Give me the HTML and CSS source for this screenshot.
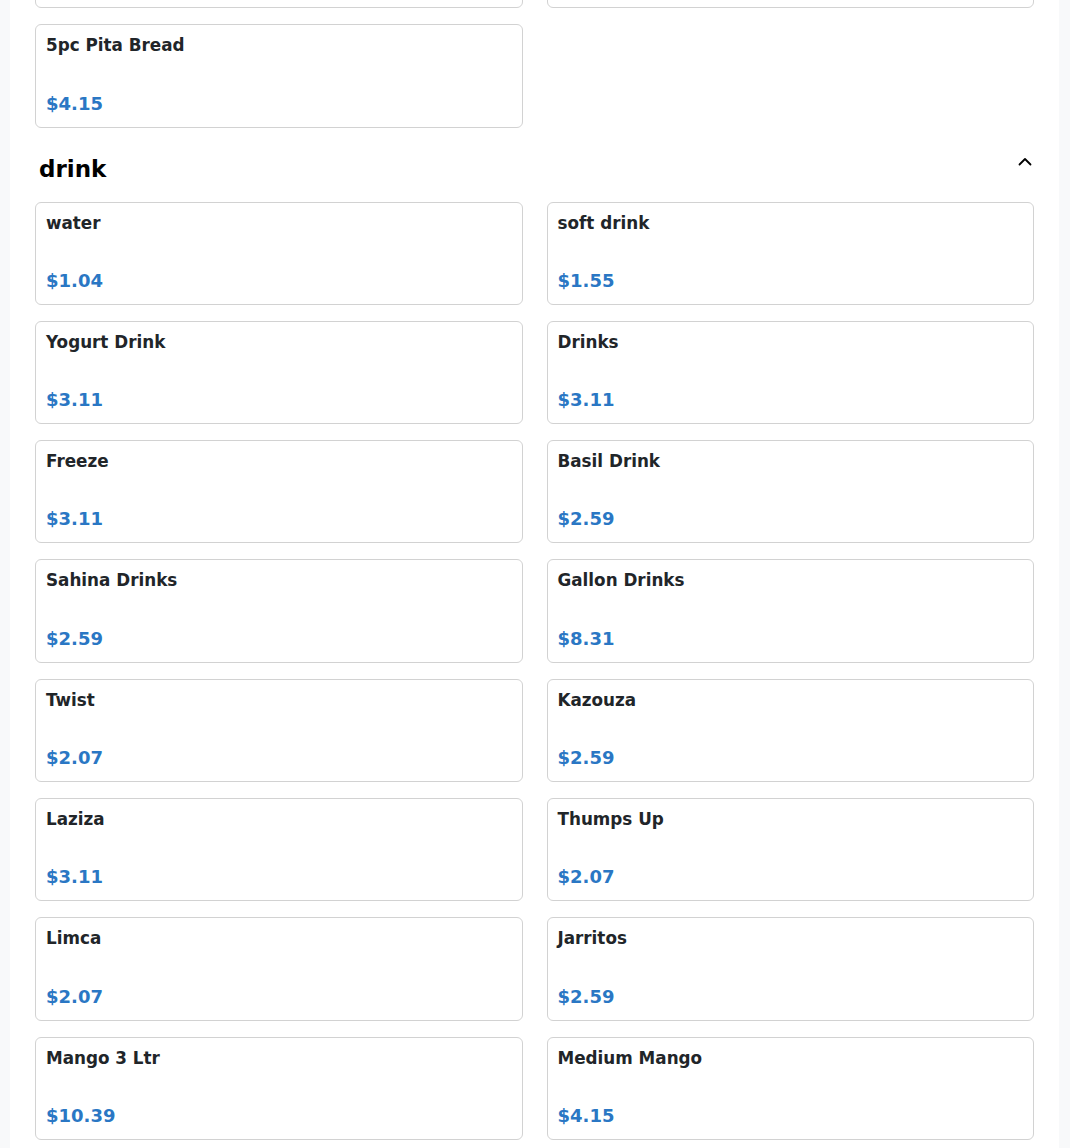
FILE: index.html
```html
<!DOCTYPE html>
<html lang="en">
<head>
    <meta charset="UTF-8">
    <meta name="viewport" content="width=device-width, initial-scale=1.0">
    <title>Menu</title>
    <link rel="stylesheet" href="styles.css">
</head>
<body>

    <div class="menu">
        <div class="section">
            <div class="items">
                <!-- previous row, scrolled out of view -->
                <div class="item"></div>
                <div class="item"></div>
                <div class="item"><span class="name">5pc Pita Bread</span><span class="price">$4.15</span></div>
            </div>
        </div>

        <div class="section">
            <div class="section-header">
                <h2>drink</h2>
                <svg class="chevron" width="14" height="9" viewBox="0 0 14 9">
                    <path d="M1.5 7.5 L7 2 L12.5 7.5" fill="none" stroke="#000" stroke-width="1.8" stroke-linecap="round" stroke-linejoin="round"/>
                </svg>
            </div>
            <div class="items">
                <div class="item"><span class="name">water</span><span class="price">$1.04</span></div>
                <div class="item"><span class="name">soft drink</span><span class="price">$1.55</span></div>
                <div class="item"><span class="name">Yogurt Drink</span><span class="price">$3.11</span></div>
                <div class="item"><span class="name">Drinks</span><span class="price">$3.11</span></div>
                <div class="item"><span class="name">Freeze</span><span class="price">$3.11</span></div>
                <div class="item"><span class="name">Basil Drink</span><span class="price">$2.59</span></div>
                <div class="item"><span class="name">Sahina Drinks</span><span class="price">$2.59</span></div>
                <div class="item"><span class="name">Gallon Drinks</span><span class="price">$8.31</span></div>
                <div class="item"><span class="name">Twist</span><span class="price">$2.07</span></div>
                <div class="item"><span class="name">Kazouza</span><span class="price">$2.59</span></div>
                <div class="item"><span class="name">Laziza</span><span class="price">$3.11</span></div>
                <div class="item"><span class="name">Thumps Up</span><span class="price">$2.07</span></div>
                <div class="item"><span class="name">Limca</span><span class="price">$2.07</span></div>
                <div class="item"><span class="name">Jarritos</span><span class="price">$2.59</span></div>
                <div class="item"><span class="name">Mango 3 Ltr</span><span class="price">$10.39</span></div>
                <div class="item"><span class="name">Medium Mango</span><span class="price">$4.15</span></div>
            </div>
        </div>
    </div>

</body>
</html>
```

FILE: styles.css
```css
html, body {
    margin: 0;
    padding: 0;
}
body {
    background-color: #f8f9fa;
    font-family: 'DejaVu Sans', Verdana, sans-serif;
    color: #212529;
    overflow: hidden;
}
.menu {
    background-color: #ffffff;
    margin: -95px 11px 0 10px;
    padding: 0 25px 40px;
}
.items {
    display: grid;
    grid-template-columns: repeat(2, 1fr);
    column-gap: 24px;
    row-gap: 16px;
}
.item {
    height: 103.3px;
    box-sizing: border-box;
    border: 1px solid #d2d2d2;
    border-radius: 6px;
    padding: 10px 10px 13px;
    display: flex;
    flex-direction: column;
    justify-content: space-between;
}
.name {
    font-size: 16.8px;
    font-weight: bold;
}
.price {
    font-size: 18px;
    font-weight: bold;
    color: #2a77c4;
}
.section-header {
    display: flex;
    justify-content: space-between;
    align-items: center;
    padding: 0 2px 0 4px;
    margin: 27px 0 19px;
}
.section-header h2 {
    margin: 0;
    font-size: 23px;
    line-height: 28px;
    font-weight: bold;
    color: #000;
}
.chevron {
    margin-top: -14px;
}
```
